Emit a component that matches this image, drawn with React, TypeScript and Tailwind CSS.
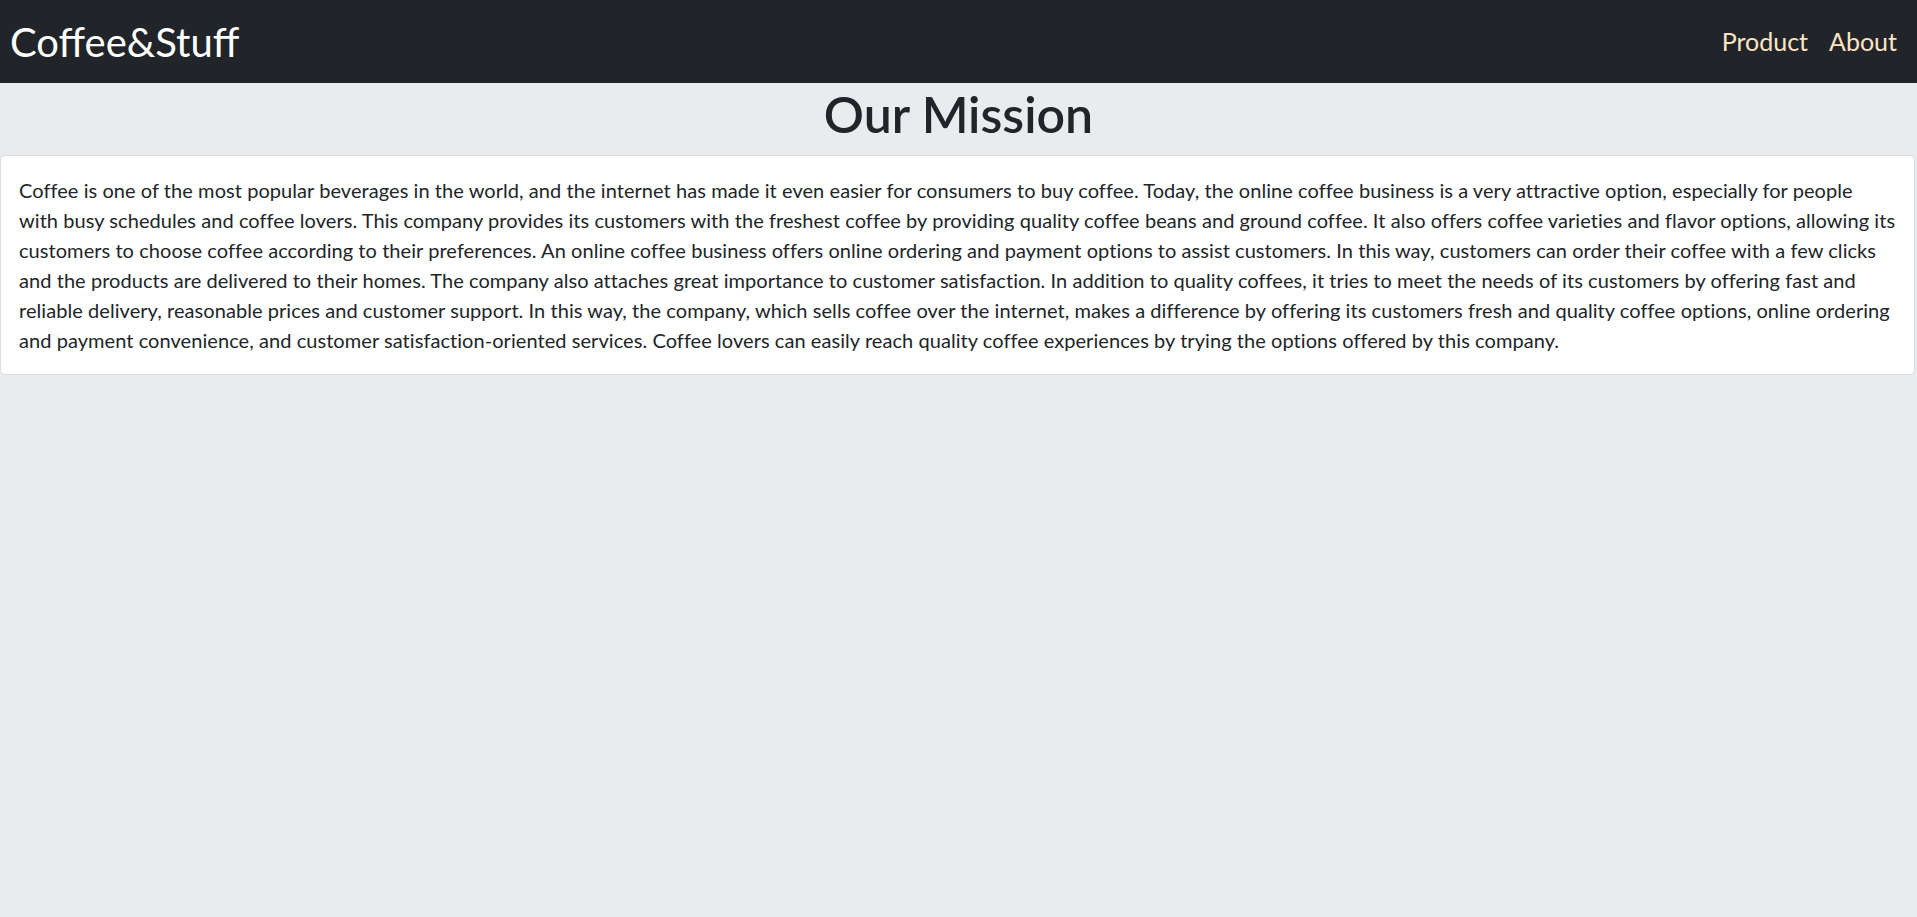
const lines = [
  'Coffee is one of the most popular beverages in the world, and the internet has made it even easier for consumers to buy coffee. Today, the online coffee business is a very attractive option, especially for people',
  'with busy schedules and coffee lovers. This company provides its customers with the freshest coffee by providing quality coffee beans and ground coffee. It also offers coffee varieties and flavor options, allowing its',
  'customers to choose coffee according to their preferences. An online coffee business offers online ordering and payment options to assist customers. In this way, customers can order their coffee with a few clicks',
  'and the products are delivered to their homes. The company also attaches great importance to customer satisfaction. In addition to quality coffees, it tries to meet the needs of its customers by offering fast and',
  'reliable delivery, reasonable prices and customer support. In this way, the company, which sells coffee over the internet, makes a difference by offering its customers fresh and quality coffee options, online ordering',
  'and payment convenience, and customer satisfaction-oriented services. Coffee lovers can easily reach quality coffee experiences by trying the options offered by this company.',
]

function Navbar() {
  return (
    <nav className="flex h-[83px] items-center justify-between bg-[#212529] pl-[10px] pr-[20px]">
      <a className="text-[40px] leading-none text-white">Coffee&amp;Stuff</a>
      <div className="flex items-center gap-[21px] text-[25px] leading-none text-[#ffe4c4]">
        <a>Product</a>
        <a>About</a>
      </div>
    </nav>
  )
}

export default function App() {
  return (
    <div className="min-h-[917px] bg-[#e9ecef] font-['Lato','Noto_Sans',sans-serif] text-[#212529]">
      <Navbar />
      <h1 className="mb-[10px] pt-[1px] text-center text-[50px] font-semibold leading-[61px]">Our Mission</h1>
      <div className="mr-[2px] rounded-[5px] border border-[#dcdcdc] bg-white px-[18px] py-[19px]">
        <p className="text-[20px] leading-[30px] tracking-[0.06px]">
          {lines.map((l) => (
            <span key={l} className="block whitespace-nowrap">
              {l}
            </span>
          ))}
        </p>
      </div>
    </div>
  )
}
